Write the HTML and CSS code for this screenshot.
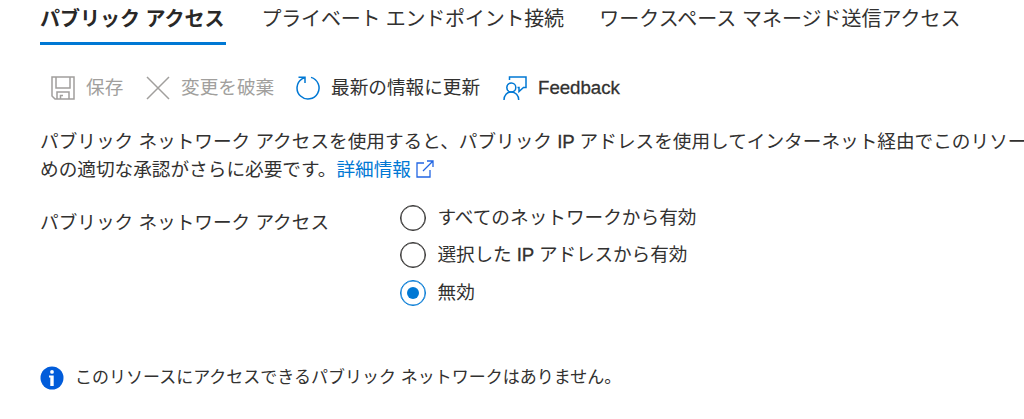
FILE: index.html
```html
<!DOCTYPE html>
<html lang="ja">
<head>
<meta charset="utf-8">
<title>パブリック アクセス</title>
<link rel="stylesheet" href="styles.css">
</head>
<body>
<nav class="tabs">
  <a class="tab active">パブリック アクセス</a>
  <a class="tab endpoints">プライベート エンドポイント接続</a>
  <a class="tab">ワークスペース マネージド送信アクセス</a>
</nav>
<div class="toolbar">
  <div class="command disabled save">
    <svg class="icon" viewBox="0 0 24 24"><path d="M1 1H23V23H4L1 20ZM5 1V12H19V1M6 23V16H18V23M9.500 23V19.500H12"/></svg>
    <span>保存</span>
  </div>
  <div class="command disabled discard">
    <svg class="icon" viewBox="0 0 24 24"><path d="M1 1L23 23M23 1L1 23"/></svg>
    <span>変更を破棄</span>
  </div>
  <div class="command refresh">
    <svg class="icon" viewBox="0 0 24 24"><path d="M15 1.400A11 11 0 1 1 6 2.800L9 1.500M2.500 1.200H9V7"/></svg>
    <span>最新の情報に更新</span>
  </div>
  <div class="command feedback">
    <svg class="icon" viewBox="0 0 24 24"><circle cx="8.300" cy="11.500" r="4.500"/><path d="M1 24C1 19.500 4 16 8.300 16S15.700 19.500 15.700 24M6.500 4V1H23V11.500H20.500L16 15.500V11.500H14.500"/></svg>
    <span class="latin">Feedback</span>
  </div>
</div>
<p class="description">パブリック ネットワーク アクセスを使用すると、パブリック <span class="latin">IP</span> アドレスを使用してインターネット経由でこのリソー<br>めの適切な承認がさらに必要です。<a class="link">詳細情報<svg class="external" viewBox="0 0 18 18"><path d="M8 3H1V17H14V10M7 11L17 1M11 1H17V7"/></svg></a></p>
<div class="field">
  <div class="label">パブリック ネットワーク アクセス</div>
  <div class="options">
    <div class="option"><span class="radio"></span><span>すべてのネットワークから有効</span></div>
    <div class="option narrow"><span class="radio"></span><span>選択した <span class="latin">IP</span> アドレスから有効</span></div>
    <div class="option"><span class="radio checked"></span><span>無効</span></div>
  </div>
</div>
<div class="notice">
  <svg class="info" viewBox="0 0 24 24"><circle cx="12" cy="12" r="11.500"/><path d="M9 9.500H13.700V20H10.300V11.500H9Z"/><circle class="dot" cx="12" cy="5.900" r="1.900"/></svg>
  <span>このリソースにアクセスできるパブリック ネットワークはありません。</span>
</div>
</body>
</html>
```
FILE: styles.css
```css
* { box-sizing: border-box; }
body {
  margin: 0;
  height: 419px;
  overflow: hidden;
  background: #fff;
  color: #323130;
  font: 18.65px/28px "Liberation Sans", "Noto Sans CJK JP", sans-serif;
  white-space: nowrap;
}
svg { fill: none; stroke: currentColor; flex: none; }
.latin { -webkit-text-stroke: 0.300px currentColor; }
.tabs { display: flex; gap: 35.500px; height: 45px; padding-left: 40px; font-size: 20px; }
.tab { height: 45px; padding-top: 5px; }
.active { width: 186px; font-weight: 700; color: #292827; border-bottom: 3px solid #0078d4; }
.endpoints { letter-spacing: -0.200px; }
.toolbar { display: flex; padding: 29px 0 0 51px; height: 83px; }
.command { display: flex; height: 28px; align-items: center; }
.icon { width: 24px; height: 24px; margin-right: 11px; color: #0078d4; stroke-width: 1.500; }
.disabled, .disabled .icon { color: #a19f9d; }
.save { width: 95px; }
.discard { width: 150px; }
.refresh { width: 207px; }
.description { margin: 0 0 0 40px; }
.link { color: #0078d4; }
.external { width: 18px; height: 18px; margin-left: 5px; vertical-align: -2px; stroke: #2266e3; stroke-width: 1.300; }
.field { display: flex; padding: 15px 0 0 40px; }
.label { width: 360px; padding-top: 10px; }
.options { display: flex; flex-direction: column; }
.option { display: flex; align-items: center; height: 37.500px; gap: 11.500px; }
.narrow { letter-spacing: -0.100px; }
.radio { display: flex; align-items: center; justify-content: center; width: 26px; height: 26px; border: 1px solid #323130; box-shadow: inset 0 0 0 0.500px #323130; border-radius: 50%; }
.checked { border-color: #0078d4; box-shadow: inset 0 0 0 0.500px #0078d4; }
.checked::after { content: ""; width: 12px; height: 12px; border-radius: 50%; background: #0078d4; }
.notice { display: flex; align-items: center; gap: 11px; margin: 52px 0 0 40px; font-size: 17px; }
.info { width: 24px; height: 24px; fill: #015cda; stroke: none; }
.info path, .info .dot { fill: #fff; }
```
